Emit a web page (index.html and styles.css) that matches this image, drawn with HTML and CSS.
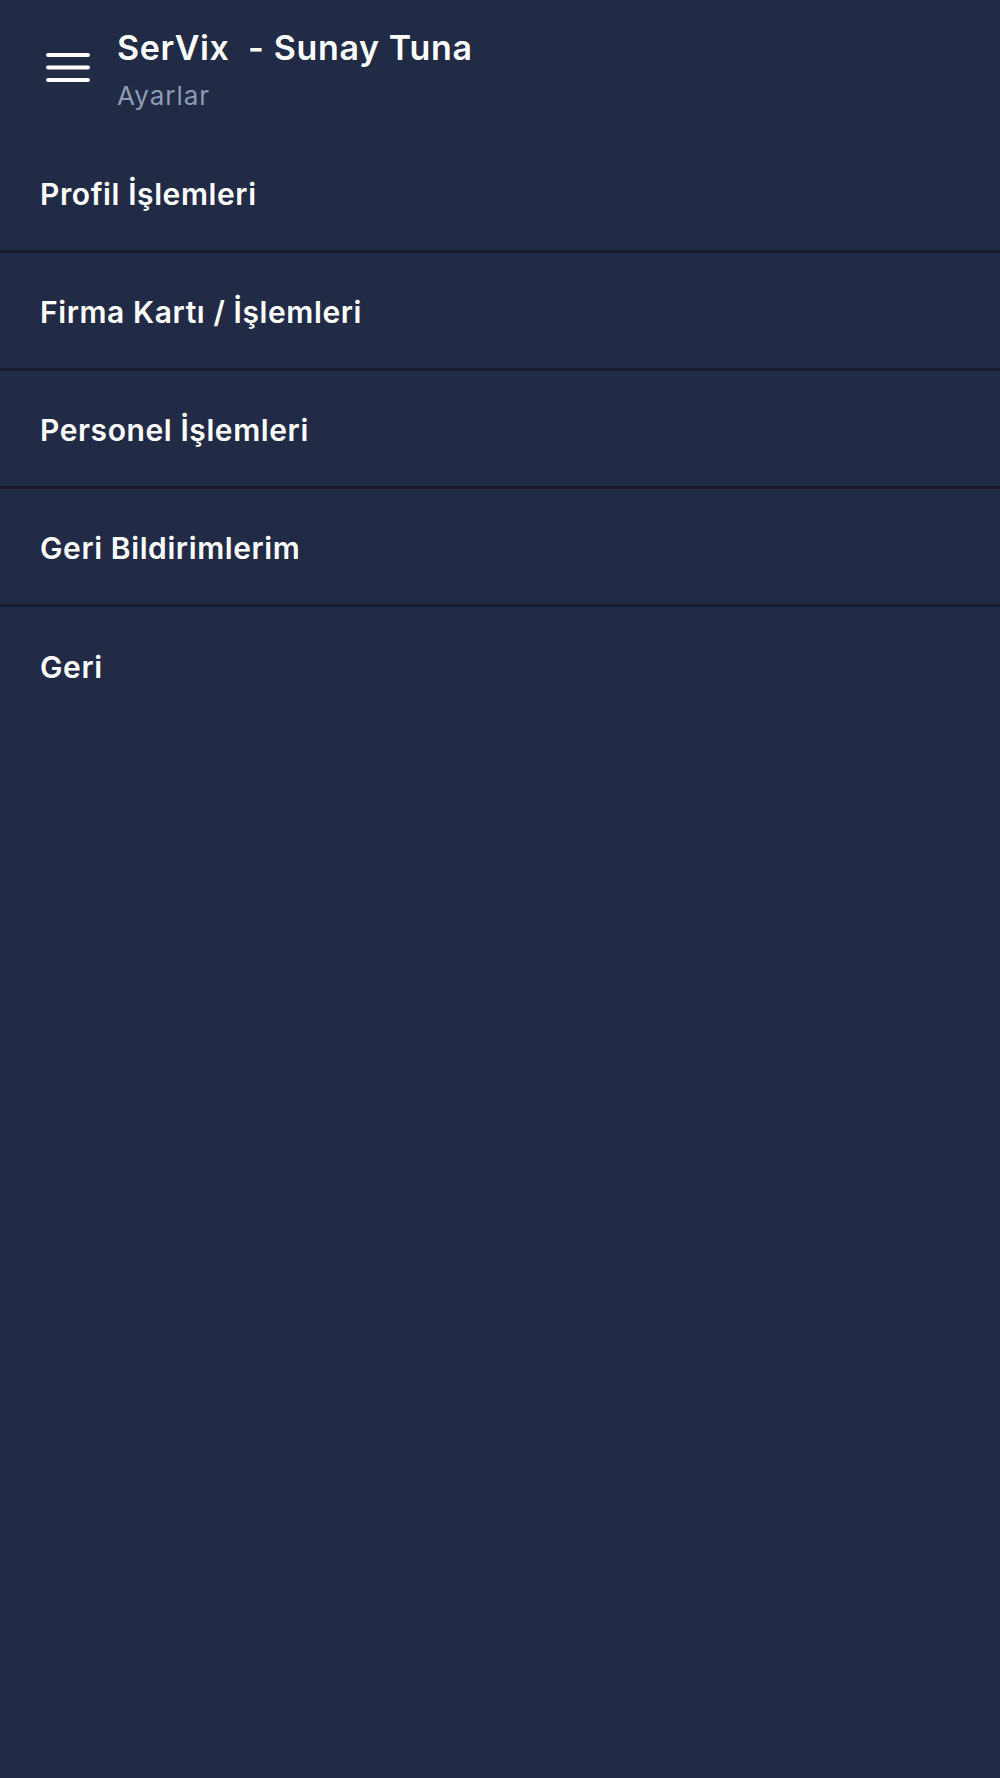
FILE: index.html
```html
<!DOCTYPE html>
<html lang="tr">
<head>
<meta charset="utf-8">
<title>SerVix - Ayarlar</title>
<link rel="stylesheet" href="styles.css">
</head>
<body>
<header class="topbar">
  <svg class="menu-icon" width="44" height="30" viewBox="0 0 44 30" aria-hidden="true">
    <line x1="2" y1="2" x2="42" y2="2" />
    <line x1="2" y1="14.5" x2="42" y2="14.5" />
    <line x1="2" y1="27" x2="42" y2="27" />
  </svg>
  <div class="titles">
    <div class="title">SerVix&nbsp; - Sunay Tuna</div>
    <div class="subtitle">Ayarlar</div>
  </div>
</header>
<nav class="menu">
  <div class="menu-item">Profil İşlemleri</div>
  <div class="menu-item">Firma Kartı / İşlemleri</div>
  <div class="menu-item">Personel İşlemleri</div>
  <div class="menu-item">Geri Bildirimlerim</div>
  <div class="menu-item last">Geri</div>
</nav>
</body>
</html>
```

FILE: styles.css
```css
html, body {
  margin: 0;
  padding: 0;
  background: #222b45;
  min-height: 100%;
}

body {
  font-family: Inter, "Noto Sans", "Liberation Sans", sans-serif;
  color: #ffffff;
  min-height: 1778px;
}

.topbar {
  box-sizing: border-box;
  height: 135px;
  display: flex;
  align-items: flex-start;
  gap: 27px;
  padding: 27px 0 0 46px;
}

.menu-icon {
  margin-top: 26px;
  flex: none;
}

.menu-icon line {
  stroke: #ffffff;
  stroke-width: 4;
  stroke-linecap: round;
}

.titles {
  display: flex;
  flex-direction: column;
}

.title {
  font-size: 34px;
  line-height: 42px;
  font-weight: 600;
  letter-spacing: 0.65px;
  color: #ffffff;
}

.subtitle {
  margin-top: 11px;
  font-size: 26px;
  line-height: 32px;
  font-weight: 400;
  letter-spacing: 1px;
  color: #8f9bb3;
}

.menu {
  display: flex;
  flex-direction: column;
}

.menu-item {
  box-sizing: border-box;
  height: 118px;
  display: flex;
  align-items: center;
  padding: 2px 0 0 40px;
  border-bottom: 3px solid #161b30;
  font-size: 30px;
  font-weight: 600;
  letter-spacing: 0.6px;
  color: #ffffff;
}

.menu-item.last {
  border-bottom: none;
}
```
